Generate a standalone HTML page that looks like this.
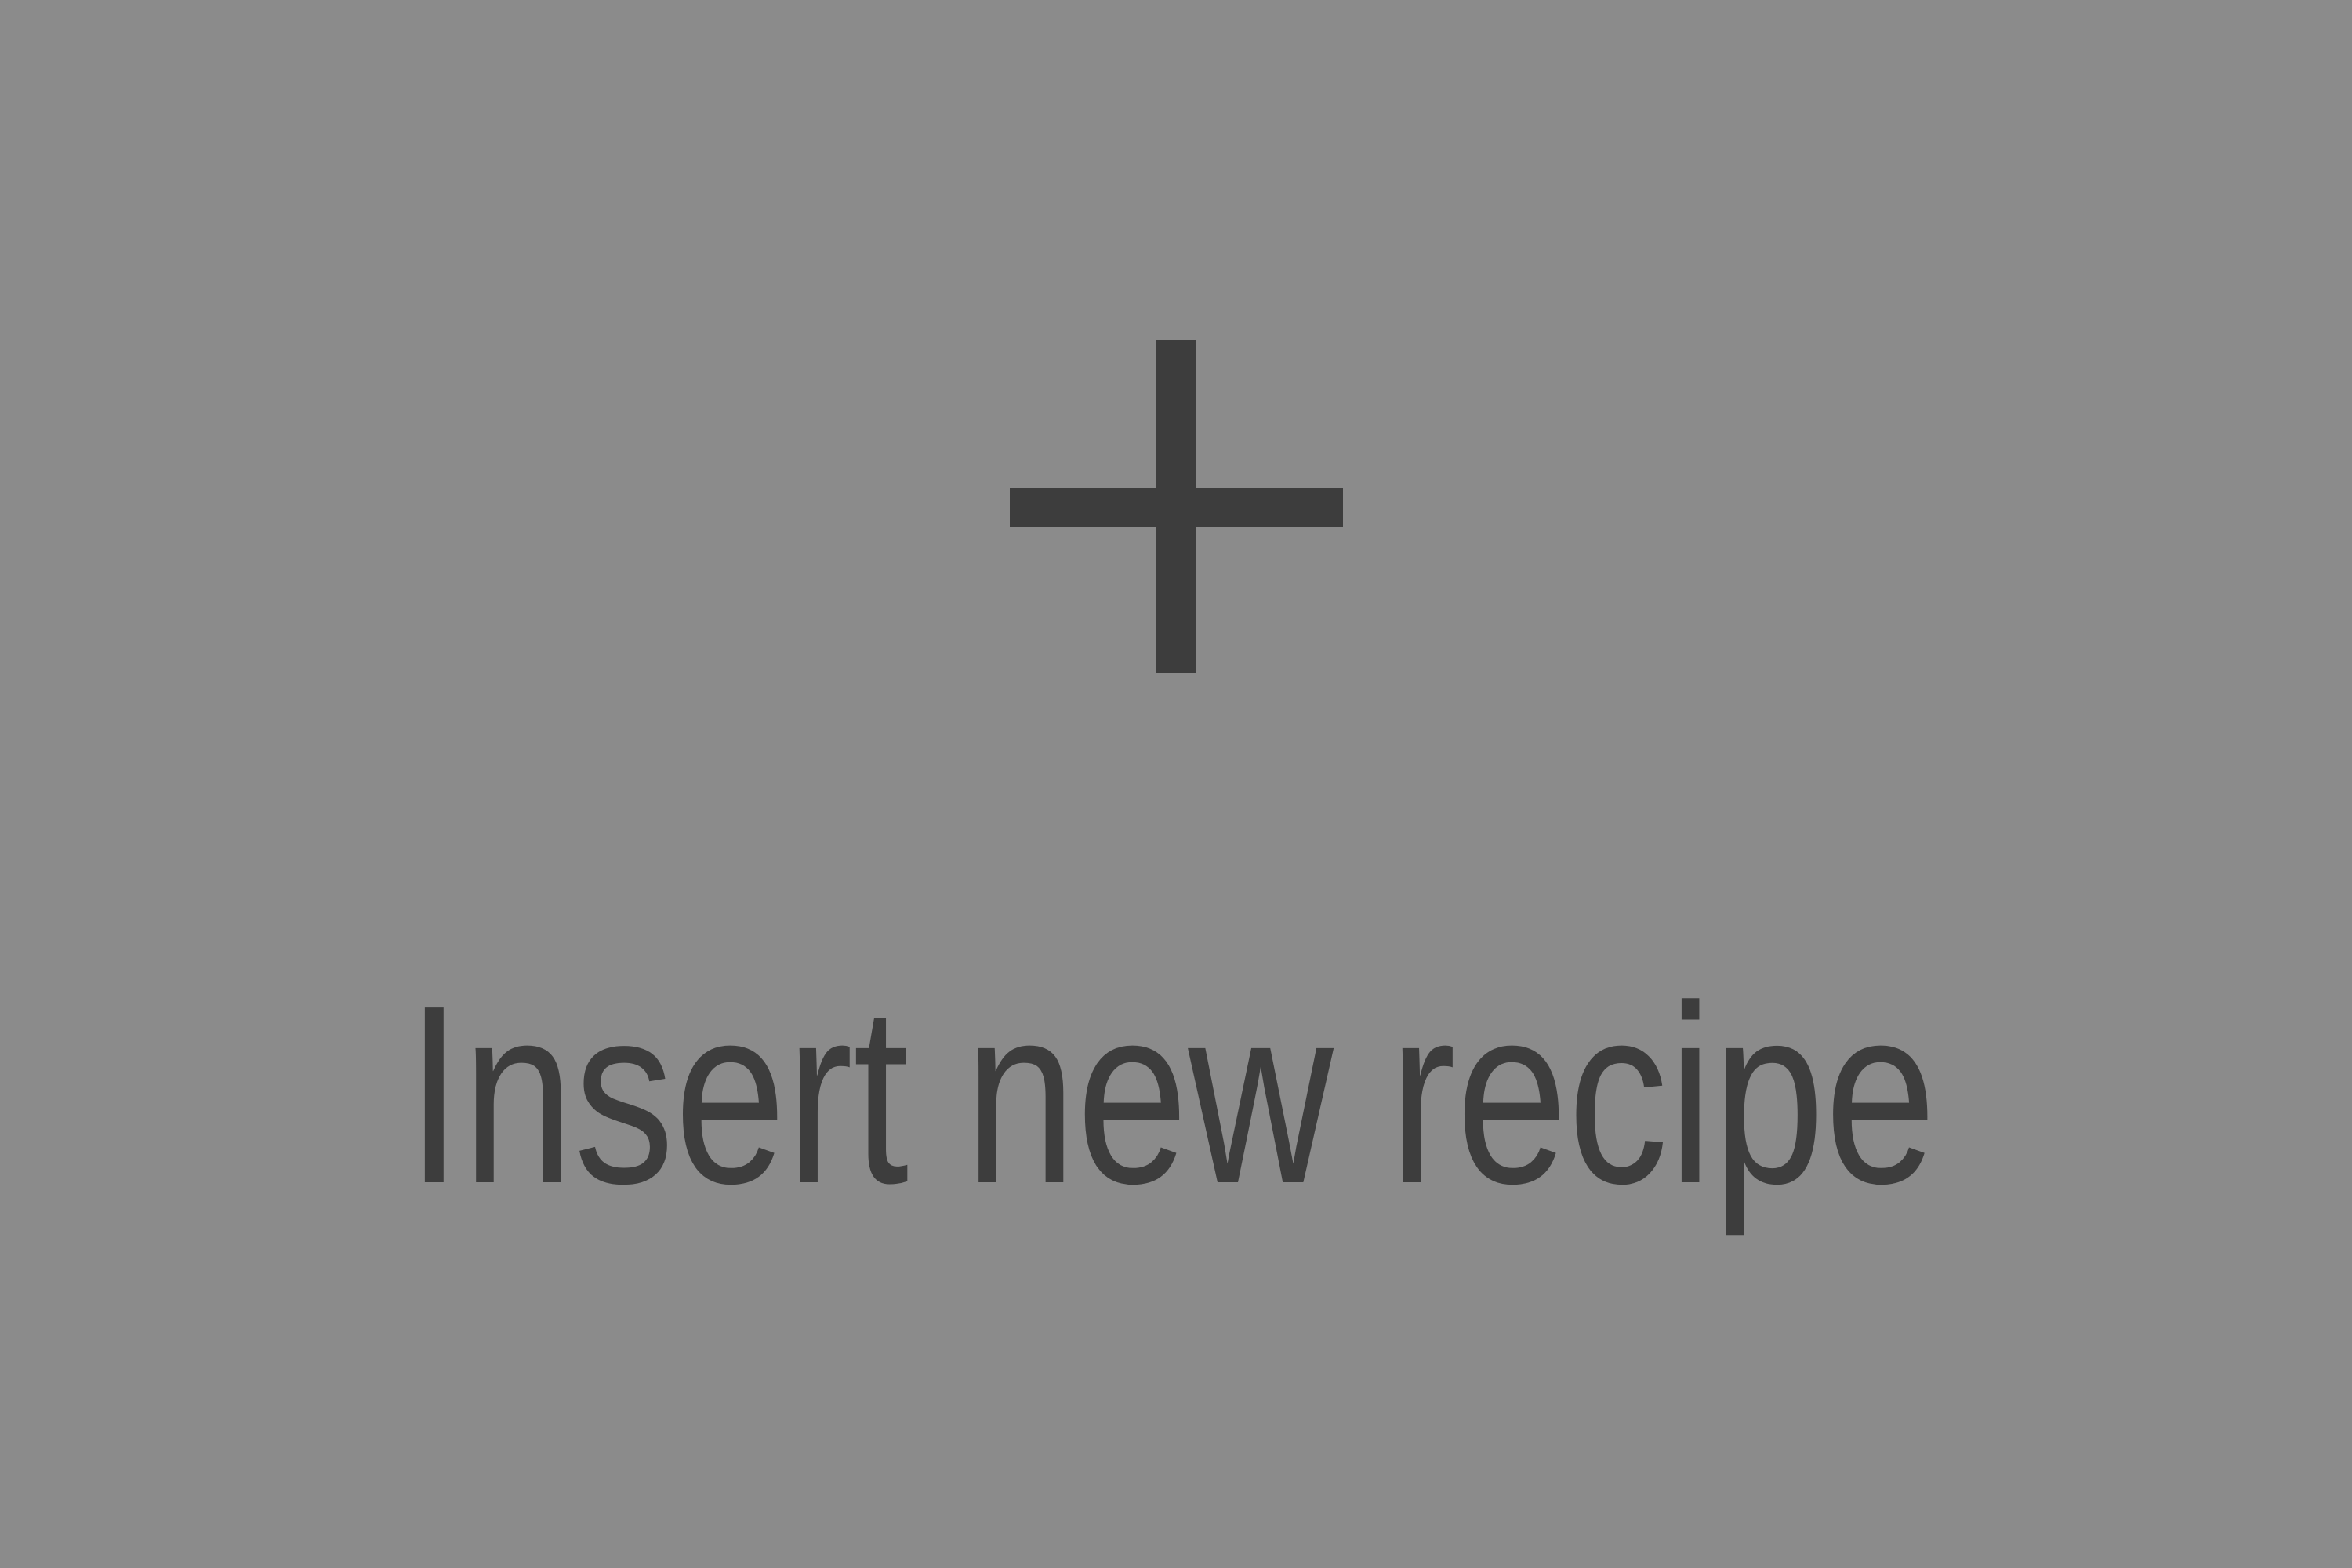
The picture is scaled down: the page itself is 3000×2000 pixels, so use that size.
<!DOCTYPE html>
<html>
<head>
<meta charset="utf-8">
<style>
html,body{margin:0;padding:0;}
body{width:3000px;height:2000px;background:#8b8b8b;position:relative;overflow:hidden;}
.v{position:absolute;left:1475px;top:434px;width:50px;height:425px;background:#3d3d3d;}
.h{position:absolute;left:1288px;top:622px;width:425px;height:50px;background:#3d3d3d;}
.t{position:absolute;left:-6px;width:3000px;top:1234px;text-align:center;
font-family:"Liberation Sans",Arial,sans-serif;font-size:324px;line-height:324px;color:#3d3d3d;
white-space:nowrap;transform:scaleX(0.791);transform-origin:1500px 0;}
</style>
</head>
<body>
<div class="v"></div>
<div class="h"></div>
<div class="t">Insert new recipe</div>
</body>
</html>
